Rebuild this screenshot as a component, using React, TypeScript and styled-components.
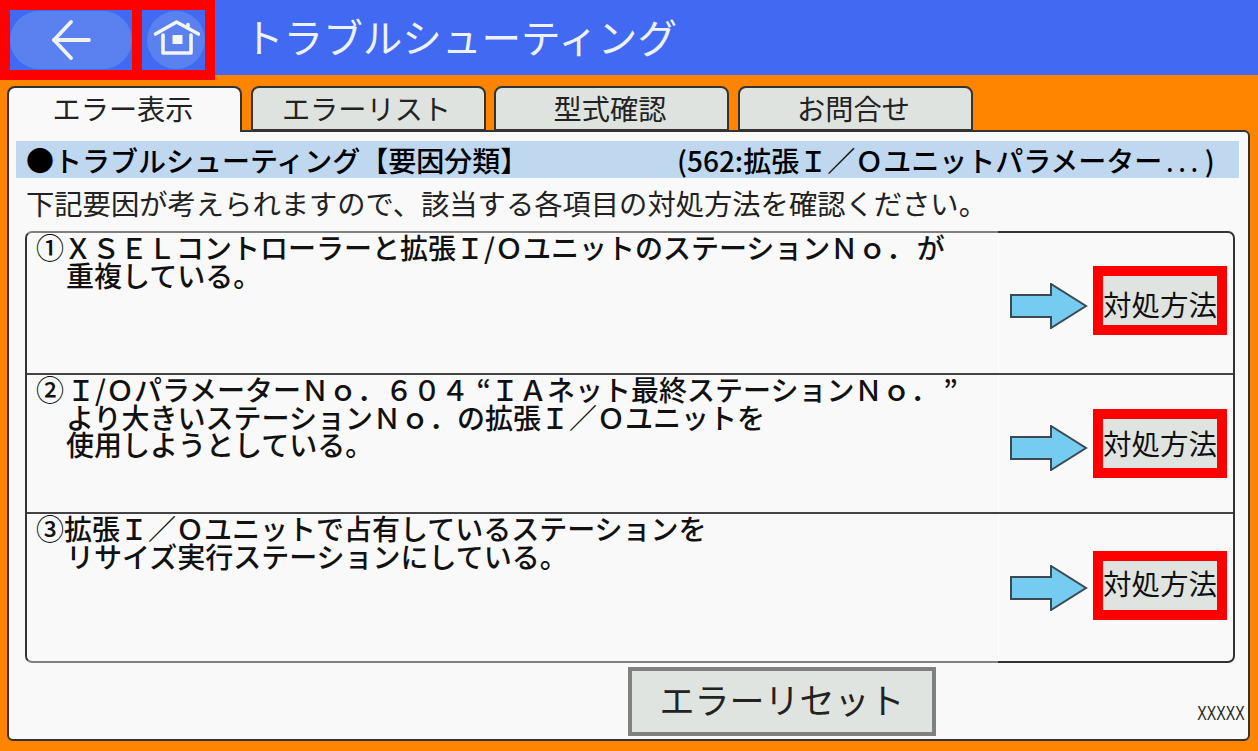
import React from "react";
import styled, { createGlobalStyle } from "styled-components";

const GlobalStyle = createGlobalStyle`
  html, body {
    margin: 0;
    padding: 0;
    background: #ff8400;
    font-family: "Noto Sans CJK JP", "Noto Sans", sans-serif;
  }
`;

const Page = styled.div`
  width: 1258px;
  height: 751px;
  background: #ff8400;
  overflow: hidden;
  display: flex;
  flex-direction: column;
`;

const Header = styled.header`
  height: 75px;
  flex: none;
  background: #4169f1;
  display: flex;
  align-items: flex-start;
`;

const NavGroup = styled.div`
  height: 80px;
  box-sizing: border-box;
  padding: 10px;
  background: #ff0000;
  display: flex;
  gap: 10px;
  position: relative;
`;

const NavSlot = styled.div<{ $width: number }>`
  width: ${(p) => p.$width}px;
  height: 60px;
  background: #4169f1;
  display: flex;
  align-items: center;
  justify-content: flex-end;
`;

const NavButton = styled.button<{ $width: number }>`
  width: ${(p) => p.$width}px;
  height: 58px;
  padding: 0;
  border: none;
  border-radius: 29px;
  background: #5b80ef;
  display: flex;
  align-items: center;
  justify-content: center;
`;

const HeaderTitle = styled.h1`
  margin: -2px 0 0 29px;
  font-size: 39.6px;
  line-height: 75px;
  font-weight: 400;
  color: #eef2f8;
  white-space: nowrap;
`;

const TabBar = styled.div`
  height: 44px;
  margin: 11px 0 0 7px;
  display: flex;
  gap: 8.5px;
  flex: none;
`;

const Tab = styled.div<{ $active?: boolean }>`
  width: 235px;
  height: ${(p) => (p.$active ? 46 : 45)}px;
  box-sizing: border-box;
  border: 2px solid #333;
  border-bottom: ${(p) => (p.$active ? "none" : "2px solid #333")};
  border-radius: 8px 8px 0 0;
  padding-right: 3px;
  background: ${(p) => (p.$active ? "#f9f9f9" : "#dfe3e0")};
  color: #222;
  font-size: 28.2px;
  line-height: 40px;
  text-align: center;
  position: relative;
  z-index: 1;
`;

const Panel = styled.main`
  width: 1243px;
  height: 611px;
  margin-left: 7px;
  box-sizing: border-box;
  border: 2px solid #333;
  border-radius: 0 6px 6px 6px;
  background: #f9f9f9;
  padding: 9px 9px 0 7px;
  display: flex;
  flex-direction: column;
`;

const TitleBar = styled.div`
  height: 37px;
  flex: none;
  background: #bfd7ef;
  display: flex;
  align-items: center;
  color: #000;
  font-size: 28px;
  font-weight: 500;
  white-space: nowrap;
`;

const TitleMain = styled.span`
  width: 651px;
  margin-left: 10px;
  flex: none;
`;

const TitleDots = styled.span`
  margin-left: 4px;
  letter-spacing: 5px;
  font-size: 24px;
`;

const TitleClose = styled.span`
  margin-left: 2px;
`;

const Notice = styled.p`
  margin: 8px 0 0 10px;
  height: 36px;
  flex: none;
  color: #222;
  font-size: 28.3px;
  line-height: 34px;
  white-space: nowrap;
`;

const CauseTable = styled.div`
  width: 1210px;
  margin: 9px 0 0 9px;
  box-sizing: border-box;
  border: 2px solid;
  border-color: transparent #333;
  border-radius: 7px;
  background: linear-gradient(to right, #808080 0 973px, #333 973px) border-box;
  display: flex;
  flex-direction: column;
`;

const CauseRow = styled.div<{ $height: number; $last?: boolean }>`
  height: ${(p) => p.$height}px;
  flex: none;
  box-sizing: border-box;
  background: #f9f9f9;
  border-bottom: ${(p) => (p.$last ? "none" : "2px solid #444")};
  display: grid;
  grid-template-columns: 972px 1fr;

  &:first-child {
    border-radius: 5px 5px 0 0;
  }

  &:last-child {
    border-radius: 0 0 5px 5px;
  }
`;

const CauseText = styled.div`
  padding: 1px 0 0 9px;
  border-right: 1px solid #fff;
  color: #111;
  font-size: 28px;
  font-weight: 500;
  line-height: 27.7px;
  word-spacing: -4px;
  white-space: nowrap;
`;

const Line = styled.div<{ $indent?: boolean }>`
  padding-left: ${(p) => (p.$indent ? 30 : 0)}px;
`;

const Nudge = styled.span`
  padding-left: 3px;
`;

const Quote = styled.span<{ $open?: boolean }>`
  display: inline-block;
  width: ${(p) => (p.$open ? 22 : 24)}px;
  text-align: ${(p) => (p.$open ? "right" : "center")};
`;

const CauseAction = styled.div<{ $top: number }>`
  padding: ${(p) => p.$top}px 0 0 11px;
  display: flex;
  align-items: flex-start;
  align-self: start;
  gap: 5px;
`;

const ArrowSlot = styled.div<{ $top: number }>`
  margin-top: ${(p) => p.$top}px;
  height: 46px;
  flex: none;
`;

const ActionButton = styled.button<{ $shift: number }>`
  width: 134px;
  height: 69px;
  box-sizing: border-box;
  border: 10px solid #ff0000;
  background: #e0e4e1;
  padding: ${(p) => Math.max(p.$shift, 0) * 2}px 0 ${(p) => Math.max(-p.$shift, 0) * 2}px;
  color: #111;
  font-family: inherit;
  font-size: 28.5px;
  line-height: 1;
  white-space: nowrap;
  display: flex;
  align-items: center;
  justify-content: center;
`;

const Footer = styled.div`
  flex: none;
  margin-top: 4px;
  display: grid;
  grid-template-columns: 612px 308px 1fr;
`;

const ResetButton = styled.button`
  grid-column: 2;
  width: 308px;
  height: 69px;
  box-sizing: border-box;
  border: 4px solid #808080;
  background: #e0e4e1;
  color: #222;
  font-family: inherit;
  font-size: 35px;
  line-height: 1;
  padding: 0 0 6px;
`;

const Version = styled.span`
  grid-column: 3;
  justify-self: end;
  align-self: end;
  margin: 0 -6px 13px 0;
  color: #222;
  font-family: "Liberation Sans", sans-serif;
  font-size: 20px;
  line-height: 20px;
  transform: scaleX(0.71);
  transform-origin: right center;
`;

const BackIcon = () => (
  <svg width="44" height="44" viewBox="0 0 44 44" fill="none" stroke="#f1f4ee" strokeWidth="3.8" strokeLinecap="round" strokeLinejoin="round">
    <path d="M5 22H40" />
    <path d="M22 4L5 22L22 40" />
  </svg>
);

const HomeIcon = () => (
  <svg width="48" height="44" viewBox="0 0 48 44" fill="none" stroke="#f4f6f2" strokeWidth="3.6" strokeLinejoin="round" strokeLinecap="round">
    <path d="M3.5 16L24.5 4L46.5 16" />
    <path d="M36 10V6.5" />
    <path d="M11 17V35H39V17" />
    <rect x="20.5" y="17" width="10" height="9" fill="#f4f6f2" stroke="none" />
  </svg>
);

const GoArrow = () => (
  <svg width="78" height="46" viewBox="0 0 78 46">
    <path
      d="M1 12H41V1L76 23L41 45V34H1Z"
      fill="#76ccf0"
      stroke="#3a4a50"
      strokeWidth="2"
      strokeLinejoin="miter"
    />
  </svg>
);

const causes = [
  {
    id: 1,
    height: 142,
    top: 33,
    arrowTop: 17,
    shift: 4,
    lines: [
      "①ＸＳＥＬコントローラーと拡張Ｉ/Ｏユニットのステーション\uFF2E\uFF4F． が",
      "重複している。",
    ],
  },
  {
    id: 2,
    height: 139,
    top: 34,
    arrowTop: 16,
    shift: 0,
    lines: [
      <>
        ②<Nudge>Ｉ/ＯパラメーターＮｏ．６０４</Nudge>
        <Quote $open>“</Quote>ＩＡネット最終ステーションＮｏ．<Quote>”</Quote>
      </>,
      "より大きいステーションＮｏ．の拡張Ｉ／Ｏユニットを",
      "使用しようとしている。",
    ],
  },
  {
    id: 3,
    height: 147,
    top: 37,
    arrowTop: 14,
    shift: -2,
    lines: [
      "③拡張Ｉ／Ｏユニットで占有しているステーションを",
      "リサイズ実行ステーションにしている。",
    ],
  },
];

const tabs = ["エラー表示", "エラーリスト", "型式確認", "お問合せ"];

export default function App() {
  return (
    <Page>
      <GlobalStyle />
      <Header>
        <NavGroup>
          <NavSlot $width={122}>
            <NavButton $width={122}>
              <BackIcon />
            </NavButton>
          </NavSlot>
          <NavSlot $width={63}>
            <NavButton $width={58}>
              <HomeIcon />
            </NavButton>
          </NavSlot>
        </NavGroup>
        <HeaderTitle>トラブルシューティング</HeaderTitle>
      </Header>

      <TabBar>
        {tabs.map((tab, i) => (
          <Tab key={tab} $active={i === 0}>
            {tab}
          </Tab>
        ))}
      </TabBar>

      <Panel>
        <TitleBar>
          <TitleMain>●トラブルシューティング【要因分類】</TitleMain>
          <span>
            (562:拡張Ｉ／Ｏユニットパラメーター
            <TitleDots>...</TitleDots>
            <TitleClose>)</TitleClose>
          </span>
        </TitleBar>
        <Notice>下記要因が考えられますので、該当する各項目の対処方法を確認ください。</Notice>

        <CauseTable>
          {causes.map((cause, i) => (
            <CauseRow key={cause.id} $height={cause.height} $last={i === causes.length - 1}>
              <CauseText>
                {cause.lines.map((line, j) => (
                  <Line key={j} $indent={j > 0}>
                    {line}
                  </Line>
                ))}
              </CauseText>
              <CauseAction $top={cause.top}>
                <ArrowSlot $top={cause.arrowTop}>
                  <GoArrow />
                </ArrowSlot>
                <ActionButton $shift={cause.shift}>対処方法</ActionButton>
              </CauseAction>
            </CauseRow>
          ))}
        </CauseTable>

        <Footer>
          <ResetButton>エラーリセット</ResetButton>
          <Version>XXXXX</Version>
        </Footer>
      </Panel>
    </Page>
  );
}
